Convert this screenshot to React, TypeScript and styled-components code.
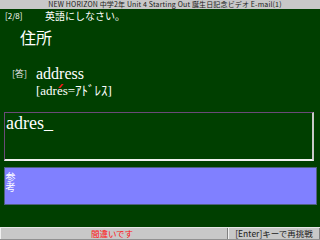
import styled, { createGlobalStyle } from "styled-components";

const Global = createGlobalStyle`
  html, body {
    margin: 0;
    padding: 0;
    background: #003f00;
  }
  #root {
    width: 320px;
    height: 240px;
  }
`;

const jp = `"Noto Sans CJK JP", "DejaVu Sans", sans-serif`;
const serif = `"Liberation Serif", "Noto Sans CJK JP", serif`;

const Screen = styled.div`
  width: 320px;
  height: 240px;
  display: flex;
  flex-direction: column;
  background: #003f00;
  overflow: hidden;
`;

const TitleBar = styled.div`
  height: 9px;
  background: #c8c8c8;
  color: #202020;
  font-family: ${jp};
  font-size: 7px;
  line-height: 9px;
  text-align: center;
  white-space: nowrap;
  padding-left: 10px;
  letter-spacing: 0.15px;
`;

const Body = styled.div`
  flex: 1;
  display: flex;
  flex-direction: column;
  padding: 0 4px;
`;

const PromptRow = styled.div`
  display: flex;
  align-items: center;
  height: 13px;
  color: #ffffff;
  font-family: ${jp};
`;

const Counter = styled.span`
  font-size: 8px;
  width: 40px;
  padding-left: 1px;
`;

const Prompt = styled.span`
  font-size: 10px;
`;

const Question = styled.div`
  color: #ffffff;
  font-family: ${jp};
  font-size: 16px;
  line-height: 20px;
  margin: 5px 0 0 16px;
`;

const AnswerBlock = styled.div`
  display: grid;
  grid-template-columns: 24px 1fr;
  margin-top: 19px;
  padding-left: 8px;
  color: #ffffff;
`;

const AnswerTag = styled.span`
  font-family: ${jp};
  font-size: 9px;
  line-height: 16px;
  color: #e0e0e0;
`;

const AnswerWord = styled.div`
  font-family: ${serif};
  font-size: 16px;
  line-height: 16px;
`;

const Reading = styled.div`
  grid-column: 2;
  font-family: ${serif};
  font-size: 13px;
  line-height: 16px;
  margin-top: 1px;
`;

const Accent = styled.span`
  position: relative;
  &::after {
    content: "";
    position: absolute;
    left: 3px;
    top: 1px;
    width: 2px;
    height: 4px;
    background: #ff1818;
    transform: skewX(-40deg);
  }
`;

const InputBox = styled.div`
  box-sizing: border-box;
  margin-top: 13px;
  width: 310px;
  height: 49px;
  border-top: 1px solid #6a4a78;
  border-left: 1px solid #6a4a78;
  border-right: 2px solid #c8c8c8;
  border-bottom: 2px solid #f0f0f0;
  color: #ffffff;
  font-family: ${serif};
  font-size: 18px;
  line-height: 18px;
  padding: 1px 0 0 1px;
`;

const HintBox = styled.div`
  box-sizing: border-box;
  margin-top: 6px;
  width: 313px;
  height: 38px;
  background: #8080ff;
  border: 1px solid #506080;
  display: flex;
  align-items: flex-start;
`;

const HintLabel = styled.span`
  writing-mode: vertical-rl;
  color: #ffffff;
  font-family: ${jp};
  font-size: 10px;
  line-height: 10px;
  margin-top: 4px;
`;

const StatusBar = styled.div`
  box-sizing: border-box;
  height: 13px;
  display: grid;
  grid-template-columns: 228px 1fr;
  background: #c8c8c8;
  border-top: 1px solid #e8e8e8;
  border-bottom: 1px solid #909090;
  font-family: ${jp};
  font-size: 8.5px;
  line-height: 11px;
`;

const StatusCell = styled.div<{ $tone: "error" | "plain" }>`
  color: ${(p) => (p.$tone === "error" ? "#ff1010" : "#202020")};
  text-align: center;
  border-left: 1px solid #f0f0f0;
  border-right: 1px solid #808080;
  white-space: nowrap;
  ${(p) => (p.$tone === "error" ? "padding-right: 4px;" : "")}
`;

export default function App() {
  return (
    <Screen>
      <Global />
      <TitleBar>
        NEW HORIZON 中学2年 Unit 4 Starting Out 誕生日記念ビデオ E-mail(1)
      </TitleBar>
      <Body>
        <PromptRow>
          <Counter>[2/8]</Counter>
          <Prompt>英語にしなさい。</Prompt>
        </PromptRow>
        <Question>住所</Question>
        <AnswerBlock>
          <AnswerTag>[答]</AnswerTag>
          <AnswerWord>address</AnswerWord>
          <Reading>
            [adr<Accent>e</Accent>s=ｱﾄﾞﾚｽ]
          </Reading>
        </AnswerBlock>
        <InputBox>adres_</InputBox>
        <HintBox>
          <HintLabel>参考</HintLabel>
        </HintBox>
      </Body>
      <StatusBar>
        <StatusCell $tone="error">間違いです</StatusCell>
        <StatusCell $tone="plain">[Enter]キーで再挑戦</StatusCell>
      </StatusBar>
    </Screen>
  );
}
